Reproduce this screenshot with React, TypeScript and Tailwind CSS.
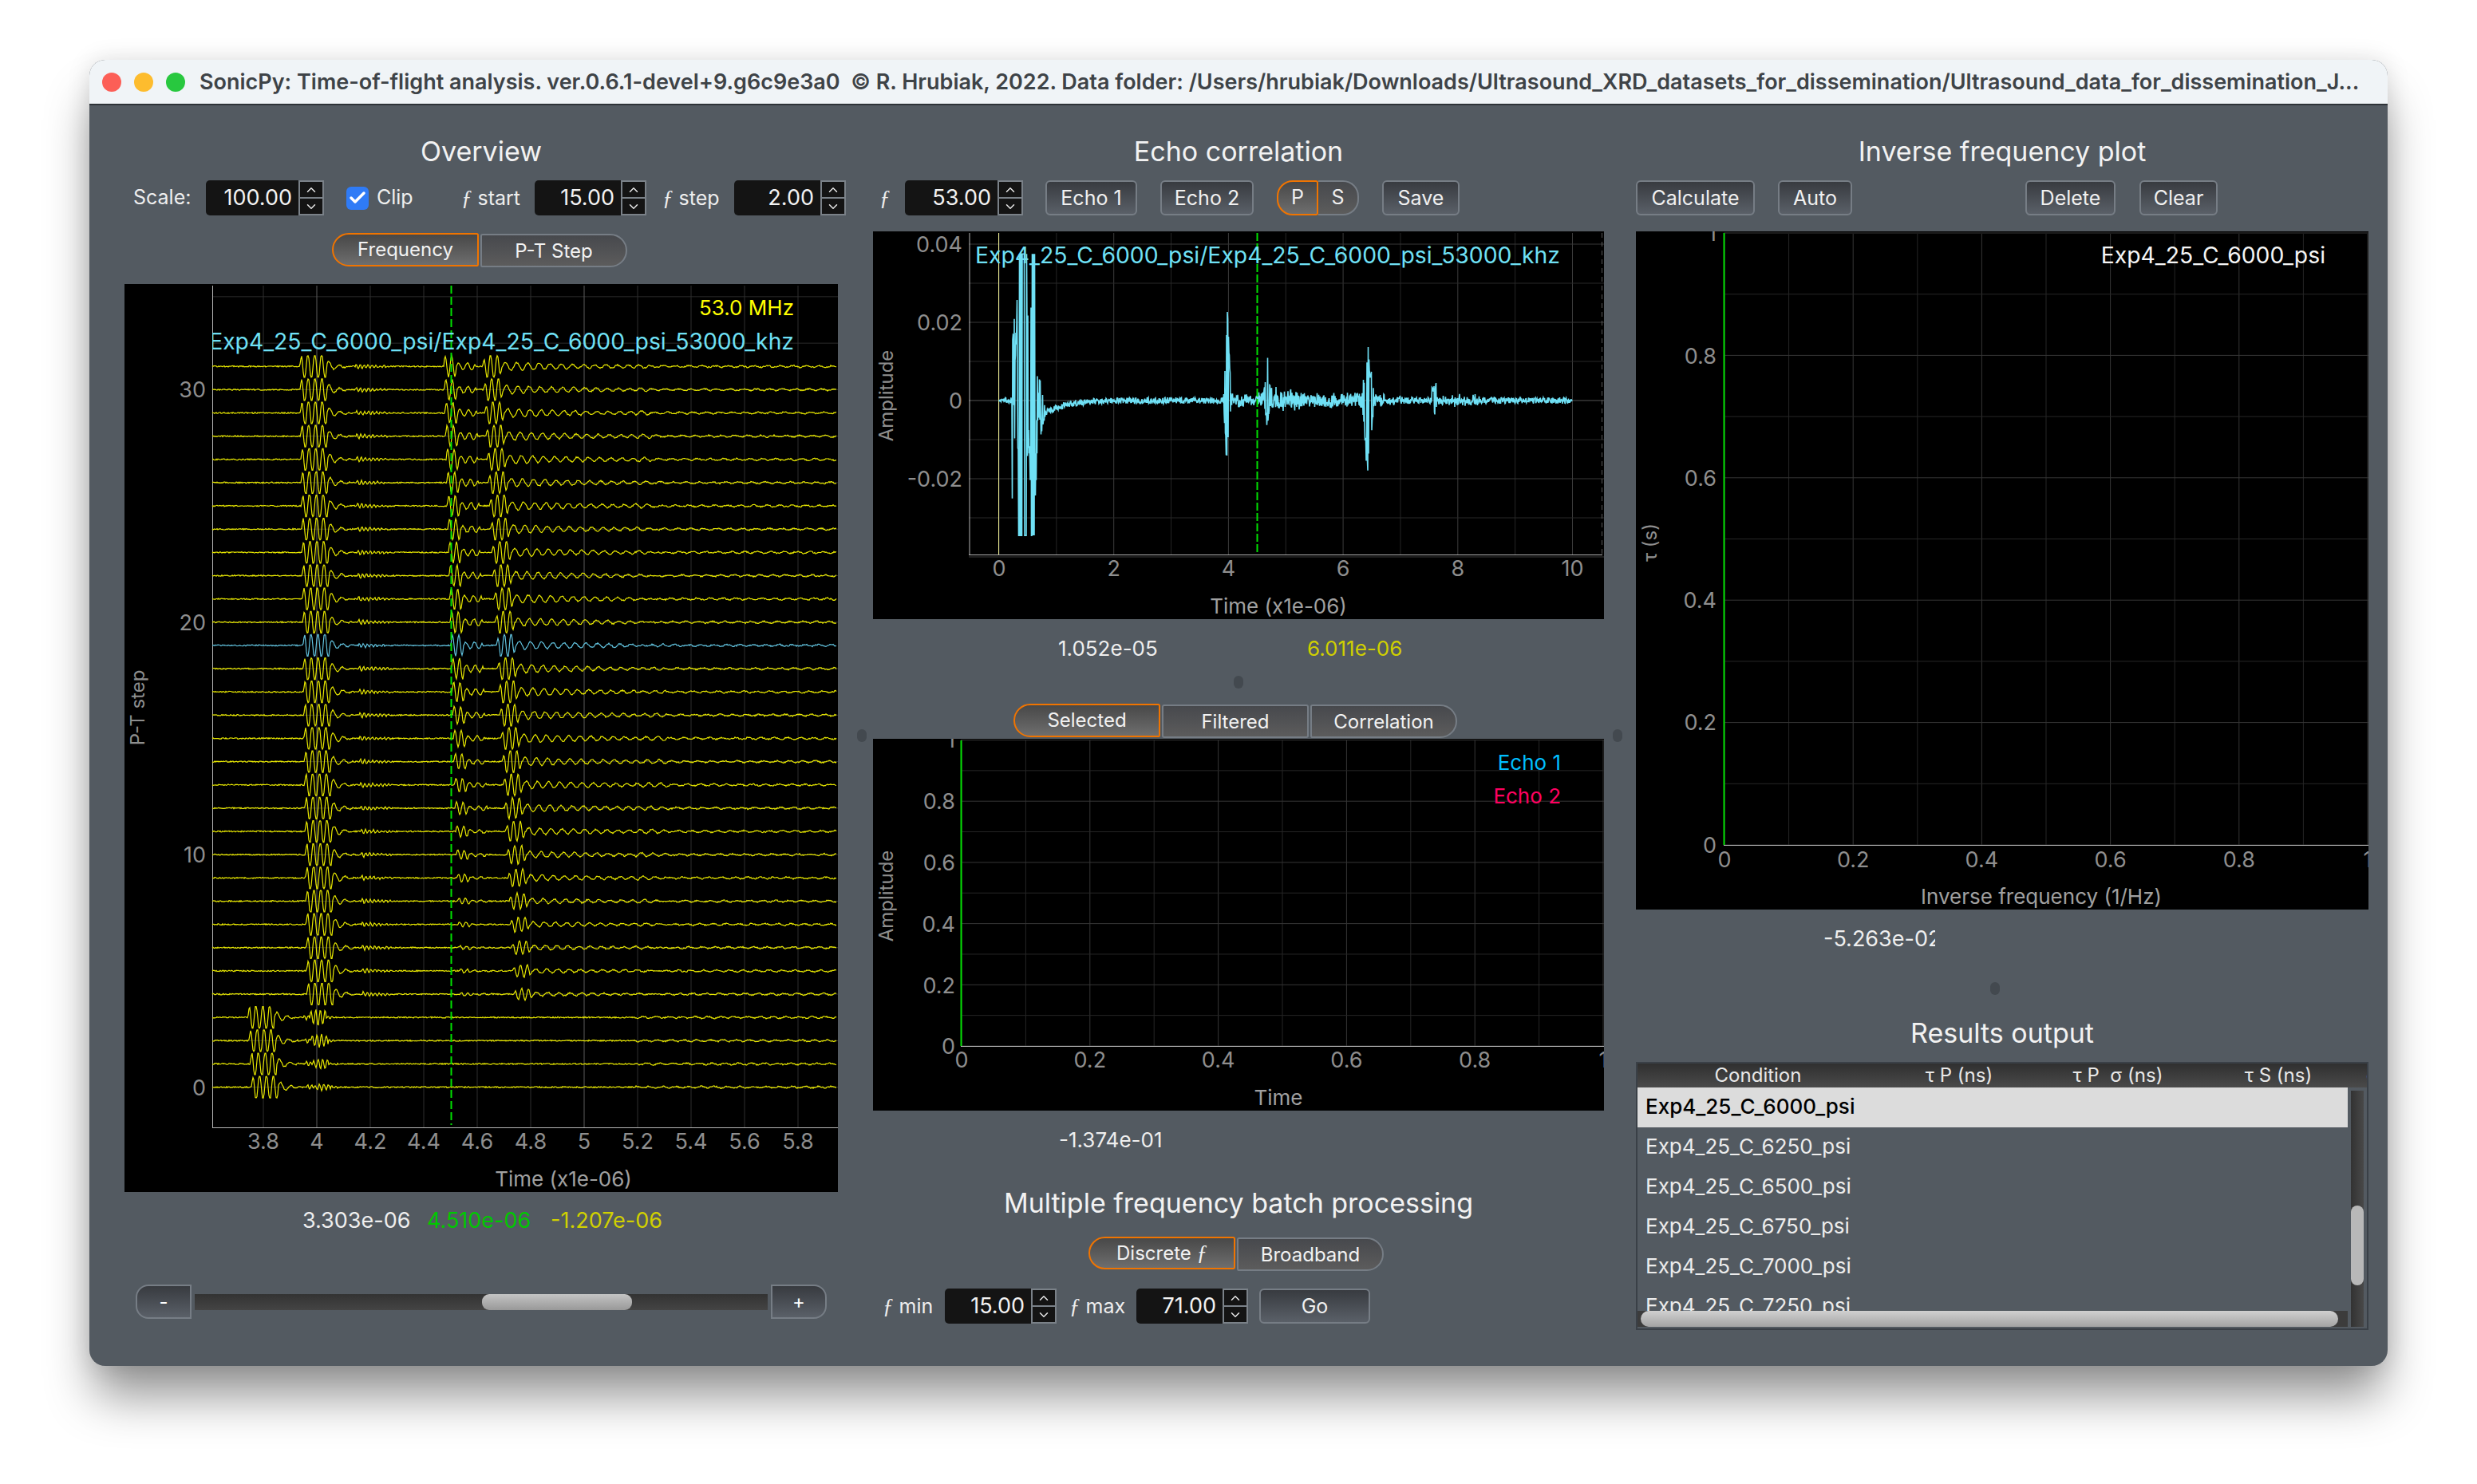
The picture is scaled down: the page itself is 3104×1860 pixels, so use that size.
import React from 'react';
import { Check, ChevronDown, ChevronUp } from 'lucide-react';

// seeded random so the traces stay the same on every render
const makeRng = (seed: number) => {
  let s = seed * 2654435761 + 12345;
  return () => {
    s = (s * 1664525 + 1013904223) % 4294967296;
    return s / 4294967296;
  };
};

const clamp = (v: number, lo: number, hi: number) => Math.max(lo, Math.min(hi, v));

// Overview: one trace per P-T step, coordinates local to the plot (plot origin 156,356)
const overviewY = (row: number) => 1006.6 - 29.14 * row;

const overviewTrace = (row: number) => {
  const rng = makeRng(row + 7);
  const y0 = overviewY(row);
  const s1 = row >= 4 ? 228 - (row - 4) * 0.33 : 154 + (3 - row) * 1.5;
  const s2 = 400 + (31 - row) * 0.75;
  const s3 = 448 + (31 - row) * 1.45;
  const amp2 = row >= 4 ? 2 + 11 * clamp((row - 6) / 12, 0, 1) : 0;
  const amp3 = row >= 4 ? 7 + 8 * clamp((row - 4) / 10, 0, 1) : 0;
  const pts: string[] = [];
  for (let x = 110; x <= 892; x += 1) {
    let v = (rng() - 0.5) * 1.6;
    const d1 = x - s1;
    if (d1 >= 0 && d1 < 34) v += 16 * Math.sin((d1 / 8.6) * 2 * Math.PI) * Math.min(1, d1 / 3);
    else if (d1 >= 34 && d1 < 62) v += 8 * Math.exp(-(d1 - 34) / 12) * Math.sin(((d1 - 34) / 13) * 2 * Math.PI);
    else if (d1 >= 70 && d1 < 110) v += 3 * Math.exp(-(d1 - 70) / 30) * Math.sin(((d1 - 70) / 5) * 2 * Math.PI);
    if (row < 4 && d1 >= 78 && d1 < 100) v += 6 * Math.sin(((d1 - 78) / 6) * 2 * Math.PI) * (row / 3 + 0.4);
    const d2 = x - s2;
    if (d2 >= 0 && d2 < 16) v += amp2 * Math.sin((d2 / 8) * 2 * Math.PI);
    else if (d2 >= 16 && d2 < 40) v += (amp2 / 3.2) * Math.sin(((d2 - 16) / 11) * 2 * Math.PI);
    const d3 = x - s3;
    if (d3 >= 0 && d3 < 26) v += amp3 * Math.sin((d3 / 8.5) * 2 * Math.PI) * Math.min(1, Math.sin((d3 / 26) * Math.PI) * 1.8);
    else if (d3 >= 26 && d3 < 210) v += (amp3 / 2.8) * Math.exp(-(d3 - 26) / 130) * Math.sin(((d3 - 26) / 14) * 2 * Math.PI);
    if (x > 640) v += 1 * Math.sin(x / 2.6 + row);
    pts.push(`${x.toFixed(1)},${(y0 - clamp(v, -13.5, 13.5)).toFixed(1)}`);
  }
  return pts.join(' ');
};

// Echo plot: amplitude to pixels, plot origin 1094,290
const echoPoints = () => {
  const rng = makeRng(3);
  const spikes = [
    { x: 444, up: 0.026, down: 0.022, w: 5 },
    { x: 494, up: 0.01, down: 0.007, w: 5 },
    { x: 620.5, up: 0.0165, down: 0.022, w: 8 },
  ];
  const pts: string[] = [];
  for (let x = 158; x <= 876; x += 0.5) {
    const t = (x - 158) / 71.85;
    let a = (rng() - 0.5) * 0.0016 * (t < 0.1 ? 0.4 : 1);
    const sign = rng() > 0.5 ? 1 : -1;
    if (t > 0.72 && t < 1.8) a -= 0.0042 * Math.exp(-(t - 0.72) * 3);
    if (x > 174 && x < 206) a += sign * 0.02 * rng() * 1.4;
    if (x > 182 && x < 193) a = sign * 0.05;
    if (x > 198 && x < 203) a = sign * 0.05;
    if (x >= 206 && x < 216) a += sign * 0.006 * rng();
    for (const sp of spikes) {
      const d = Math.abs(x - sp.x);
      if (d < sp.w) a += (sign > 0 ? sp.up : -sp.down) * (1 - d / sp.w) * (0.5 + rng() * 0.5);
      else if (x > sp.x && x < sp.x + 45) a += sign * 0.0022 * rng() * Math.exp(-(x - sp.x) / 25);
    }
    if (x > 480 && x < 620) a += sign * 0.0016 * rng();
    if (Math.abs(x - 703) < 3) a += sign * 0.003;
    if (x > 703 && x < 760) a += sign * 0.001 * rng();
    pts.push(`${x.toFixed(1)},${(212 - clamp(a, -0.0345, 0.0375) * 4900).toFixed(1)}`);
  }
  return pts.join(' ');
};

const range = (n: number) => Array.from({ length: n }, (_, i) => i);

const tickFill = '#8e8e8e';
const tickSize = 27;
const axisSize = 26;
const labelSize = 28.3;

function Overview() {
  const ticks = ['3.8', '4', '4.2', '4.4', '4.6', '4.8', '5', '5.2', '5.4', '5.6', '5.8'];
  return (
    <svg width={894} height={1138} className="block bg-black">
      <defs>
        <clipPath id="ov-clip">
          <rect x={110} y={0} width={784} height={1138} />
        </clipPath>
      </defs>
      {range(18).map((i) => (
        <line key={i} x1={110} x2={894} y1={overviewY(i * 2)} y2={overviewY(i * 2)} stroke="#2b2b2b" />
      ))}
      {ticks.map((t, i) => (
        <line key={t} x1={174 + i * 67} x2={174 + i * 67} y1={2} y2={1057} stroke={t === '4' || t === '5' ? '#5c5c5c' : '#2e2e2e'} />
      ))}
      <line x1={110.5} x2={110.5} y1={2} y2={1057} stroke="#b5b5b5" />
      <line x1={110} x2={894} y1={1057.5} y2={1057.5} stroke="#b5b5b5" />
      {range(32).map((r) => (
        <polyline key={r} points={overviewTrace(r)} fill="none" stroke={r === 19 ? '#62c4e0' : '#e8e800'} strokeWidth={1.2} />
      ))}
      <line x1={409.5} x2={409.5} y1={2} y2={1054} stroke="#00e000" strokeWidth={2} strokeDasharray="10 4" />
      {[['30', 30], ['20', 20], ['10', 10], ['0', 0]].map(([l, r]) => (
        <text key={l} x={102} y={overviewY(r as number) + 10} textAnchor="end" fontSize={tickSize} fill={tickFill}>{l}</text>
      ))}
      {ticks.map((t, i) => (
        <text key={t} x={174 + i * 67} y={1084} textAnchor="middle" fontSize={tickSize} fill={tickFill}>{t}</text>
      ))}
      <text x={550} y={1131} textAnchor="middle" fontSize={axisSize} fill="#a0a0a0">Time (x1e-06)</text>
      <text x={25} y={531} textAnchor="middle" fontSize={24} fill={tickFill} transform="rotate(-90 25 531)">P-T step</text>
      <text x={839} y={39} textAnchor="end" fontSize={26} fill="#ffff00">53.0 MHz</text>
      <g clipPath="url(#ov-clip)">
        <text x={839} y={82} textAnchor="end" fontSize={labelSize} fill="#6fe0f5">Exp4_25_C_6000_psi/Exp4_25_C_6000_psi_53000_khz</text>
      </g>
    </svg>
  );
}

function EchoPlot() {
  return (
    <svg width={916} height={486} className="block bg-black">
      {range(12).map((i) => (
        <line key={i} x1={158 + i * 71.85} x2={158 + i * 71.85} y1={2} y2={405} stroke={i % 2 ? '#262626' : '#3c3c3c'} />
      ))}
      {range(9).map((i) => (
        <line key={i} x1={120} x2={916} y1={16 + i * 49} y2={16 + i * 49} stroke={i === 4 ? '#555' : i % 2 ? '#282828' : '#383838'} />
      ))}
      <line x1={121} x2={121} y1={2} y2={405} stroke="#b5b5b5" />
      <line x1={120} x2={914} y1={405.5} y2={405.5} stroke="#b5b5b5" />
      <line x1={913.5} x2={913.5} y1={2} y2={405} stroke="#555" strokeDasharray="6 5" />
      <line x1={157.5} x2={157.5} y1={2} y2={405} stroke="#e8e890" />
      <polyline points={echoPoints()} fill="none" stroke="#6fe0f5" strokeWidth={1.6} />
      <line x1={481.5} x2={481.5} y1={2} y2={405} stroke="#00e000" strokeWidth={2} strokeDasharray="10 3" />
      {[['0.04', 16], ['0.02', 114], ['0', 212], ['-0.02', 310]].map(([l, y]) => (
        <text key={l} x={112} y={(y as number) + 10} textAnchor="end" fontSize={tickSize} fill={tickFill}>{l}</text>
      ))}
      {['0', '2', '4', '6', '8', '10'].map((t, i) => (
        <text key={t} x={158 + i * 143.7} y={432} textAnchor="middle" fontSize={tickSize} fill={tickFill}>{t}</text>
      ))}
      <text x={508} y={479} textAnchor="middle" fontSize={axisSize} fill="#a0a0a0">Time (x1e-06)</text>
      <text x={25} y={206} textAnchor="middle" fontSize={24} fill={tickFill} transform="rotate(-90 25 206)">Amplitude</text>
      <text x={128} y={40} fontSize={labelSize} fill="#6fe0f5">Exp4_25_C_6000_psi/Exp4_25_C_6000_psi_53000_khz</text>
    </svg>
  );
}

function CorrelationPlot() {
  return (
    <svg width={916} height={466} className="block bg-black">
      {range(11).map((i) => (
        <line key={i} x1={111 + i * 80.4} x2={111 + i * 80.4} y1={2} y2={385} stroke={i % 2 ? '#262626' : '#363636'} />
      ))}
      {range(11).map((i) => (
        <line key={i} x1={110} x2={916} y1={385 - i * 38.35} y2={385 - i * 38.35} stroke={i % 2 ? '#262626' : '#363636'} />
      ))}
      <line x1={110} x2={916} y1={385.5} y2={385.5} stroke="#b5b5b5" />
      <line x1={110.5} x2={110.5} y1={2} y2={385} stroke="#00e000" strokeWidth={2} />
      {[['1', 1], ['0.8', 78], ['0.6', 155], ['0.4', 232], ['0.2', 309], ['0', 385]].map(([l, y]) => (
        <text key={l} x={103} y={(y as number) + 10} textAnchor="end" fontSize={tickSize} fill={tickFill}>{l}</text>
      ))}
      {['0', '0.2', '0.4', '0.6', '0.8', '1'].map((t, i) => (
        <text key={t} x={111 + i * 160.8} y={412} textAnchor="middle" fontSize={tickSize} fill={tickFill}>{t}</text>
      ))}
      <text x={508} y={459} textAnchor="middle" fontSize={axisSize} fill="#a0a0a0">Time</text>
      <text x={25} y={197} textAnchor="middle" fontSize={24} fill={tickFill} transform="rotate(-90 25 197)">Amplitude</text>
      <text x={862} y={39} textAnchor="end" fontSize={26} fill="#00bfff">Echo 1</text>
      <text x={862} y={81} textAnchor="end" fontSize={26} fill="#ff0060">Echo 2</text>
    </svg>
  );
}

function InversePlot() {
  return (
    <svg width={918} height={850} className="block bg-black">
      {range(11).map((i) => (
        <line key={i} x1={111 + i * 80.6} x2={111 + i * 80.6} y1={3} y2={769} stroke={i % 2 ? '#262626' : '#363636'} />
      ))}
      {range(11).map((i) => (
        <line key={i} x1={110} x2={918} y1={769 - i * 76.7} y2={769 - i * 76.7} stroke={i % 2 ? '#262626' : '#363636'} />
      ))}
      <line x1={110} x2={918} y1={769.5} y2={769.5} stroke="#b5b5b5" />
      <line x1={110.5} x2={110.5} y1={2} y2={769} stroke="#00e000" strokeWidth={2} />
      {[['1', 2], ['0.8', 155.7], ['0.6', 309], ['0.4', 462], ['0.2', 615], ['0', 769]].map(([l, y]) => (
        <text key={l} x={101} y={(y as number) + 10} textAnchor="end" fontSize={tickSize} fill={tickFill}>{l}</text>
      ))}
      {['0', '0.2', '0.4', '0.6', '0.8', '1'].map((t, i) => (
        <text key={t} x={111 + i * 161.2} y={797} textAnchor="middle" fontSize={tickSize} fill={tickFill}>{t}</text>
      ))}
      <text x={508} y={843} textAnchor="middle" fontSize={axisSize} fill="#a0a0a0">Inverse frequency (1/Hz)</text>
      <text x={26} y={390} textAnchor="middle" fontSize={24} fill={tickFill} transform="rotate(-90 26 390)">τ (s)</text>
      <text x={864} y={40} textAnchor="end" fontSize={labelSize} fill="#f5f5f5">Exp4_25_C_6000_psi</text>
    </svg>
  );
}

const F = () => <span className="font-[family-name:'Liberation_Serif',serif] italic text-[27px]">ƒ</span>;

function Spin({ value, wide }: { value: string; wide?: boolean }) {
  return (
    <div className="flex h-[44px] shrink-0">
      <div className={`flex items-center justify-end rounded-l-[5px] bg-[#141414] pr-[8px] text-[27px] text-[#f2f2f2] ${wide ? 'w-[116px]' : 'w-[108px]'}`}>
        {value}
      </div>
      <div className="flex w-[32px] flex-col gap-[2px] border-2 border-[#7a8188] bg-[#7a8188]">
        <div className="flex flex-1 items-center justify-center bg-[#141414]">
          <ChevronUp size={18} color="#e8e8e8" strokeWidth={2} />
        </div>
        <div className="flex flex-1 items-center justify-center bg-[#141414]">
          <ChevronDown size={18} color="#e8e8e8" strokeWidth={2} />
        </div>
      </div>
    </div>
  );
}

function Btn({ children, className = '' }: { children: React.ReactNode; className?: string }) {
  return (
    <div className={`flex h-[44px] shrink-0 items-center justify-center rounded-[6px] border-2 border-[#767d85] bg-gradient-to-b from-[#383b40] to-[#5a6068] pt-[2px] text-[25px] text-[#f0f0f0] ${className}`}>
      {children}
    </div>
  );
}

function Seg({ label, on, pos, h = 'h-[42px]' }: { label: React.ReactNode; on?: boolean; pos: 'l' | 'm' | 'r'; h?: string }) {
  const corner = pos === 'l' ? 'rounded-l-[22px] rounded-r-[3px]' : pos === 'r' ? 'rounded-r-[22px] rounded-l-[3px]' : 'rounded-[3px]';
  return (
    <div
      className={`flex w-[184px] items-center justify-center border-2 text-[24px] text-[#f2f2f2] ${h} ${corner} ${
        on ? 'border-[#f07400] bg-gradient-to-b from-[#484848] to-[#6e6e6e]' : 'mt-[1px] border-[#767d85] bg-gradient-to-b from-[#47494d] to-[#5c5c5c] pt-[2px]'
      }`}
    >
      {label}
    </div>
  );
}

const Title = ({ children }: { children: React.ReactNode }) => (
  <div className="flex h-[48px] items-center justify-center text-[34px] text-[#f2f2f2]">{children}</div>
);

const Grip = () => <div className="h-[16px] w-[12px] rounded-full bg-[#43494f]" />;

function Results() {
  const rows = ['6000', '6250', '6500', '6750', '7000', '7250'];
  return (
    <div className="mt-[13px] h-[336px] w-[918px] border-2 border-[#3a4047]">
      <div className="flex h-[30px] overflow-hidden bg-gradient-to-b from-[#303030] to-[#4a4a4a] text-[24px] leading-[30px] text-[#e8e8e8]">
        <div className="w-[302px] shrink-0 text-center">Condition</div>
        <div className="w-[202px] shrink-0 text-center">τ P (ns)</div>
        <div className="w-[196px] shrink-0 whitespace-pre text-center">τ P  σ (ns)</div>
        <div className="w-[206px] shrink-0 text-center">τ S (ns)</div>
        <div className="shrink-0 pl-[7px]">c</div>
      </div>
      <div className="flex h-[302px]">
        <div className="w-[890px]">
          <div className="h-[280px] overflow-hidden">
            {rows.map((r, i) => (
              <div
                key={r}
                className={`flex h-[50px] shrink-0 items-center pb-[3px] pl-[10px] text-[26px] ${i === 0 ? 'bg-[#dcdcdc] font-medium text-black' : 'text-[#ececec]'}`}
              >
                Exp4_25_C_{r}_psi
              </div>
            ))}
          </div>
          <div className="h-[20px] bg-[#3c3c3c] pl-[4px] pr-[12px]">
            <div className="h-[20px] rounded-full bg-gradient-to-b from-[#d0d0d0] to-[#a4a4a4]" />
          </div>
        </div>
        <div className="ml-[4px] mt-[4px] h-[296px] w-[16px] bg-gradient-to-r from-[#333333] to-[#484848] pt-[144px]">
          <div className="h-[100px] rounded-full bg-[#b8b8b8]" />
        </div>
      </div>
    </div>
  );
}

export default function App() {
  return (
    <div className="h-[1860px] w-[3104px] overflow-hidden bg-white pl-[112px] pt-[75px] font-[family-name:Inter,'Noto_Sans',sans-serif]">
      <div className="h-[1637px] w-[2880px] overflow-hidden rounded-[20px] bg-[#535a61] shadow-[0_44px_60px_-6px_rgba(0,0,0,0.42),0_0_30px_rgba(0,0,0,0.12)]">
        {/* title bar */}
        <div className="flex h-[57px] items-center border-b-2 border-[#2e3338] bg-[#f0f4f7] pl-[16px]">
          <div className="flex gap-[16px]">
            <div className="h-[24px] w-[24px] rounded-full bg-[#fc5f57]" />
            <div className="h-[24px] w-[24px] rounded-full bg-[#fdbc2e]" />
            <div className="h-[24px] w-[24px] rounded-full bg-[#28c83f]" />
          </div>
          <div className="ml-[18px] whitespace-pre pt-[2px] text-[27px] font-semibold text-[#3e4347]">
            SonicPy: Time-of-flight analysis. ver.0.6.1-devel+9.g6c9e3a0  © R. Hrubiak, 2022. Data folder: /Users/hrubiak/Downloads/Ultrasound_XRD_datasets_for_dissemination/Ultrasound_data_for_dissemination_J...
          </div>
        </div>

        <div className="flex pl-[44px] pt-[33px]">
          {/* overview column */}
          <div className="w-[894px]">
            <Title>Overview</Title>
            <div className="mt-[13px] flex h-[44px] w-[904px] items-center pl-[11px] text-[25px] text-[#eeeeee]">
              <div className="w-[91px] shrink-0">Scale:</div>
              <Spin value="100.00" wide />
              <div className="ml-[28px] flex h-[29px] w-[28px] shrink-0 items-center justify-center rounded-[6px] bg-[#2f7bf6]">
                <Check size={24} color="#ffffff" strokeWidth={3.5} />
              </div>
              <div className="ml-[10px] w-[106px] shrink-0">Clip</div>
              <div className="w-[92px] shrink-0"><F /> start</div>
              <Spin value="15.00" />
              <div className="w-[110px] shrink-0 pl-[20px]"><F /> step</div>
              <Spin value="2.00" />
            </div>
            <div className="ml-[260px] mt-[22px] flex h-[44px] gap-[2px]">
              <Seg label="Frequency" on pos="l" />
              <Seg label="P-T Step" pos="r" />
            </div>
            <div className="mt-[20px]">
              <Overview />
            </div>
            <div className="mt-[18px] flex h-[36px] items-center pl-[223px] text-[27px]">
              <div className="w-[156px] text-[#eeeeee]">3.303e-06</div>
              <div className="w-[155px] text-[#00c800]">4.510e-06</div>
              <div className="text-[#d0d000]">-1.207e-06</div>
            </div>
            <div className="ml-[14px] mt-[62px] flex h-[43px] items-center gap-[4px]">
              <div className="flex h-[43px] w-[70px] items-center justify-center rounded-l-[16px] border-2 border-[#767d85] bg-gradient-to-b from-[#383b40] to-[#5a6068] text-[24px] text-white">-</div>
              <div className="flex h-[20px] w-[718px] bg-gradient-to-b from-[#333333] to-[#444444] pl-[360px]">
                <div className="h-[20px] w-[188px] rounded-[9px] bg-gradient-to-b from-[#c4c4c4] to-[#999999]" />
              </div>
              <div className="flex h-[43px] w-[70px] items-center justify-center rounded-r-[16px] border-2 border-[#767d85] bg-gradient-to-b from-[#383b40] to-[#5a6068] text-[24px] text-white">+</div>
            </div>
          </div>

          <div className="w-[44px] pl-[24px] pt-[749px]"><Grip /></div>

          {/* echo column */}
          <div className="w-[916px]">
            <Title>Echo correlation</Title>
            <div className="mt-[13px] flex h-[44px] items-center pl-[8px] text-[25px] text-[#eeeeee]">
              <div className="w-[32px] shrink-0"><F /></div>
              <Spin value="53.00" wide />
              <Btn className="ml-[28px] w-[115px]">Echo 1</Btn>
              <Btn className="ml-[29px] w-[117px]">Echo 2</Btn>
              <div className="ml-[29px] flex h-[44px] w-[103px] shrink-0">
                <div className="flex w-[52px] items-center justify-center rounded-l-[20px] rounded-r-[3px] border-2 border-[#f07400] bg-gradient-to-b from-[#484848] to-[#6e6e6e]">P</div>
                <div className="flex w-[51px] items-center justify-center rounded-r-[20px] border-2 border-l-0 border-[#767d85] bg-gradient-to-b from-[#47494d] to-[#5c5c5c]">S</div>
              </div>
              <Btn className="ml-[29px] w-[97px]">Save</Btn>
            </div>
            <div className="mt-[20px]">
              <EchoPlot />
            </div>
            <div className="mt-[18px] flex h-[36px] items-center pl-[232px] text-[26px]">
              <div className="w-[312px] text-[#eeeeee]">1.052e-05</div>
              <div className="text-[#d0d000]">6.011e-06</div>
            </div>
            <div className="flex h-[52px] justify-center pt-[17px]"><Grip /></div>
            <div className="ml-[176px] flex h-[44px] gap-[2px]">
              <Seg label="Selected" on pos="l" />
              <Seg label="Filtered" pos="m" />
              <Seg label="Correlation" pos="r" />
            </div>
            <CorrelationPlot />
            <div className="mt-[19px] h-[36px] pl-[233px] text-[26px] leading-[36px] text-[#eeeeee]">-1.374e-01</div>
            <div className="mt-[36px]">
              <Title>Multiple frequency batch processing</Title>
            </div>
            <div className="ml-[270px] mt-[19px] flex h-[43px] gap-[2px]">
              <Seg label={<span>Discrete <F /></span>} on pos="l" h="h-[41px]" />
              <Seg label="Broadband" pos="r" />
            </div>
            <div className="mt-[22px] flex h-[44px] items-center pl-[12px] text-[25px] text-[#eeeeee]">
              <div className="w-[78px] shrink-0"><F /> min</div>
              <Spin value="15.00" />
              <div className="w-[100px] shrink-0 pl-[16px]"><F /> max</div>
              <Spin value="71.00" />
              <Btn className="ml-[14px] w-[139px]">Go</Btn>
            </div>
          </div>

          <div className="w-[40px] pl-[11px] pt-[749px]"><Grip /></div>

          {/* inverse frequency column */}
          <div className="w-[918px]">
            <Title>Inverse frequency plot</Title>
            <div className="mt-[13px] flex h-[44px] items-center">
              <Btn className="w-[149px]">Calculate</Btn>
              <Btn className="ml-[29px] w-[93px]">Auto</Btn>
              <Btn className="ml-[217px] w-[113px]">Delete</Btn>
              <Btn className="ml-[30px] w-[98px]">Clear</Btn>
            </div>
            <div className="mt-[20px]">
              <InversePlot />
            </div>
            <div className="ml-[235px] mt-[19px] h-[36px] w-[140px] overflow-hidden whitespace-nowrap text-[27px] leading-[36px] text-[#eeeeee]">-5.263e-02</div>
            <div className="flex h-[75px] justify-center pt-[36px] pr-[18px]"><Grip /></div>
            <Title>Results output</Title>
            <Results />
          </div>
        </div>
      </div>
    </div>
  );
}
